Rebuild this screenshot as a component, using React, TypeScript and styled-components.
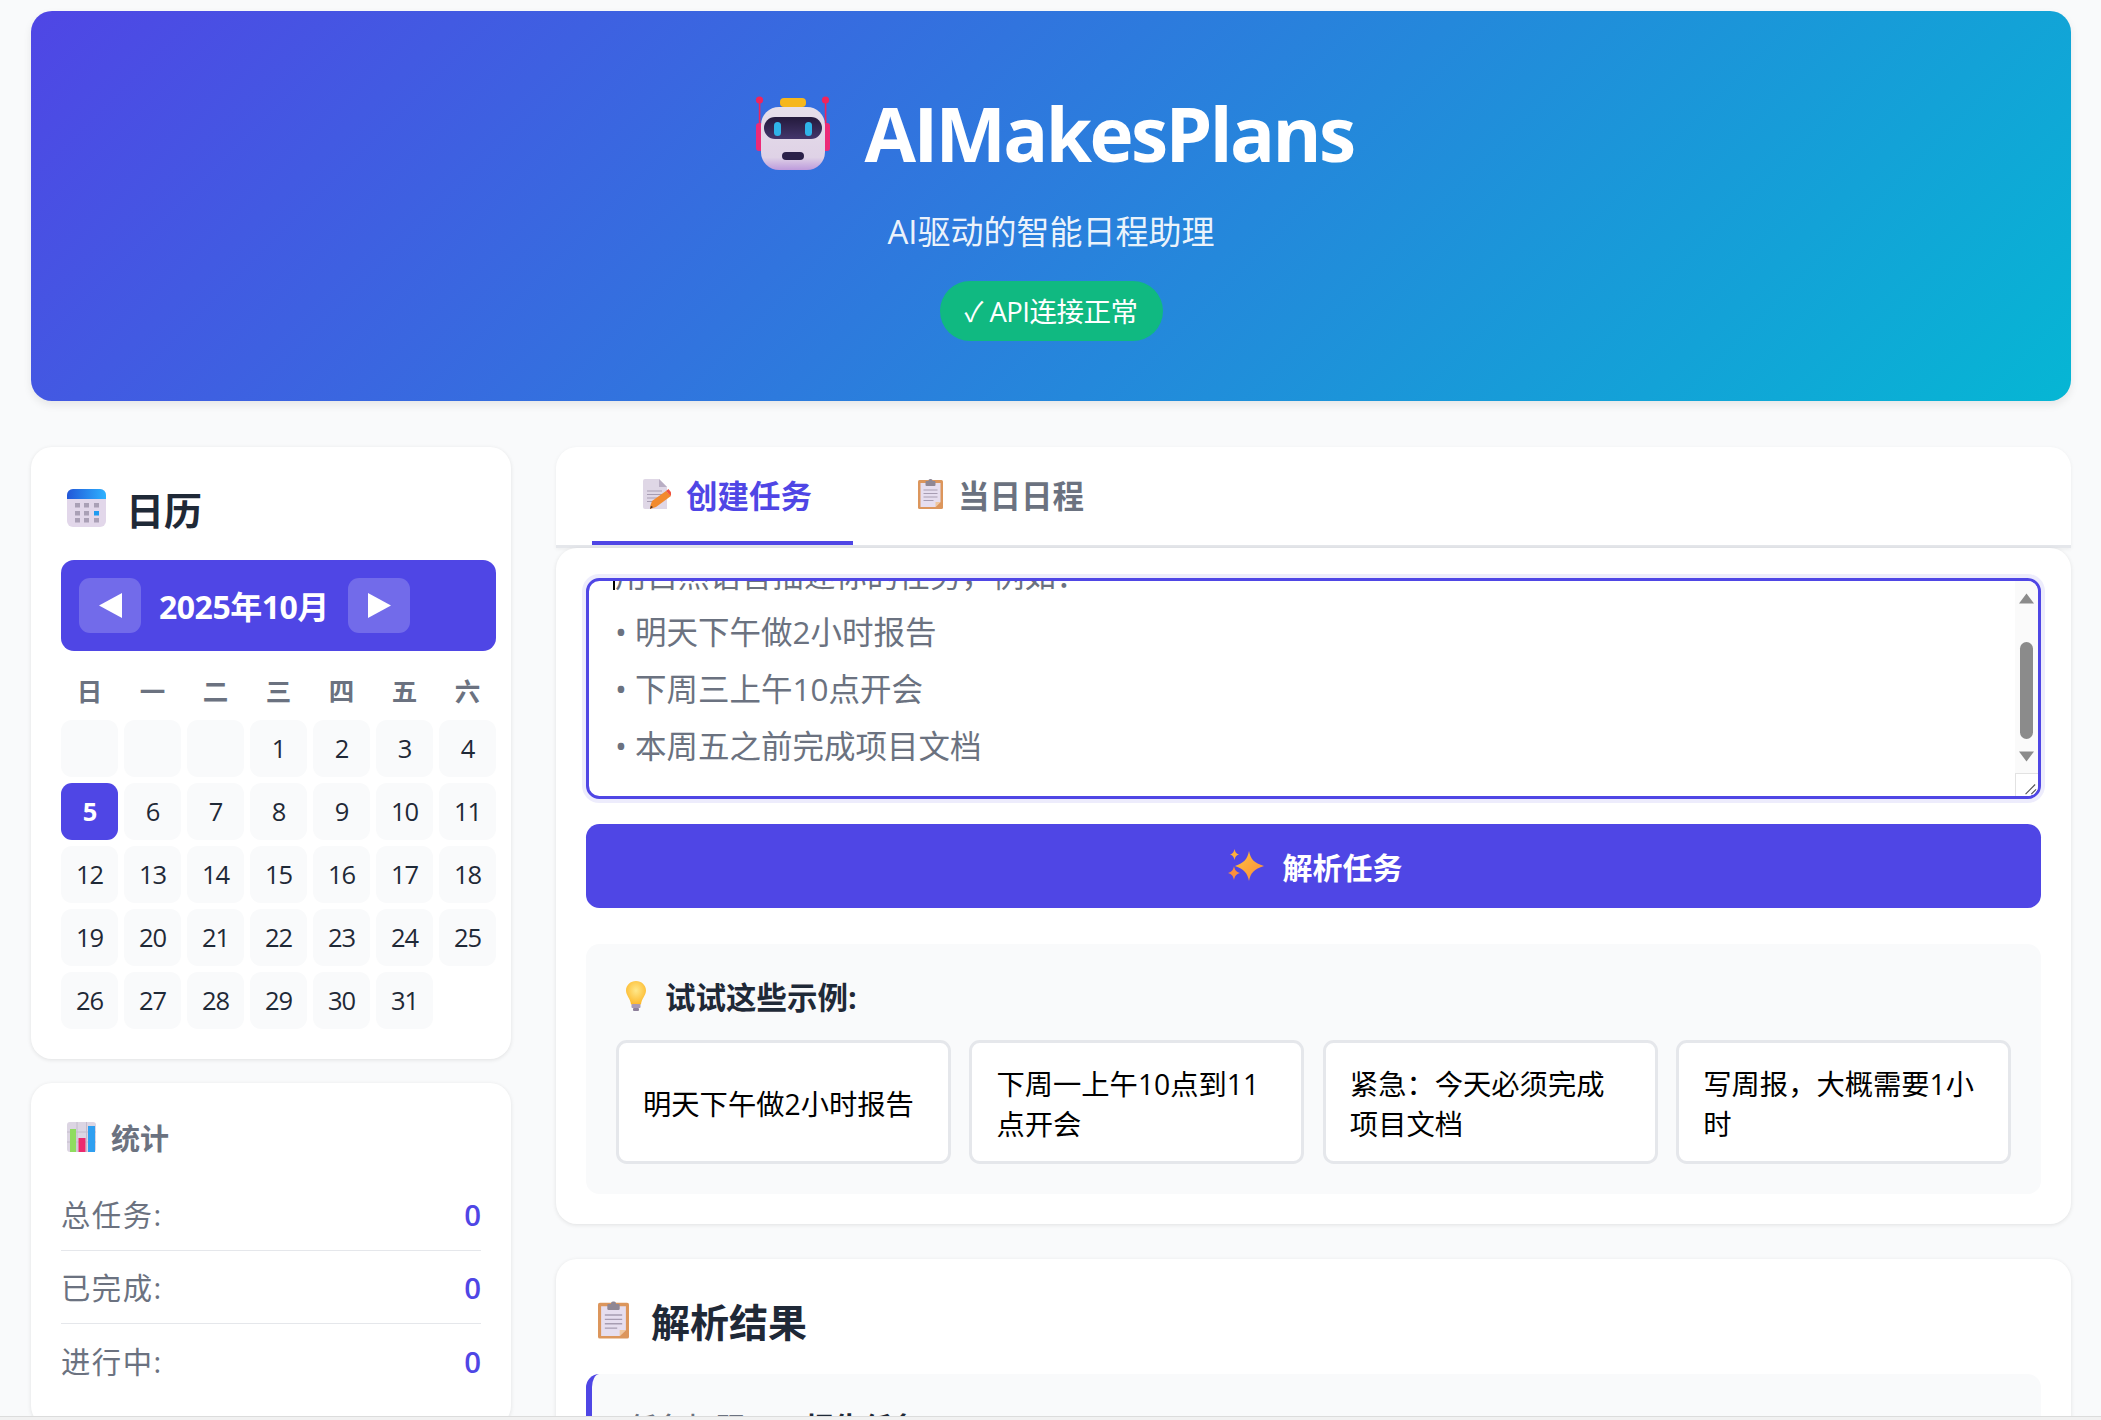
import React, { useLayoutEffect, useRef } from "react";
import styled, { createGlobalStyle } from "styled-components";

const Global = createGlobalStyle`
  html, body { margin: 0; padding: 0; background: #f1f1f1; }
  body { font-family: "Open Sans", "Noto Sans CJK SC", sans-serif; color: #1f2937; overflow: hidden; }
  * { box-sizing: border-box; }
`;

const Viewport = styled.div`
  height: 1417px;
  overflow: hidden;
  background: #f9fafb;
  border-bottom: 1px solid #dcdcdc;
  padding: 10.67px 30px 0 31px;
`;

const Hero = styled.header`
  height: 390px;
  border-radius: 21px;
  background: linear-gradient(135deg, #4f46e5 0%, #06b6d4 100%);
  box-shadow: 0 4px 8px rgba(0, 0, 0, 0.08);
  display: flex;
  flex-direction: column;
  align-items: center;
  padding-top: 82px;
  color: #fff;
`;

const HeroTitle = styled.h1`
  margin: 0;
  height: 80px;
  padding-left: 6px;
  display: flex;
  align-items: center;
  gap: 35px;
  font-size: 74.67px;
  font-weight: 700;
  letter-spacing: -2.6px;
  line-height: 80px;
`;

const HeroSub = styled.p`
  margin: 38px 0 0;
  font-size: 33px;
  line-height: 42px;
  color: rgba(255, 255, 255, 0.92);
`;

const StatusPill = styled.div`
  margin-top: 28px;
  height: 60px;
  width: 223px;
  padding-bottom: 2px;
  border-radius: 30px;
  background: #10b981;
  display: flex;
  align-items: center;
  justify-content: center;
  font-size: 27.5px;
  letter-spacing: -0.5px;
  white-space: nowrap;
`;

const Columns = styled.div`
  margin-top: 46px;
  display: grid;
  grid-template-columns: 480px 1fr;
  gap: 45px;
  align-items: start;
`;

const Side = styled.aside`
  display: flex;
  flex-direction: column;
  gap: 24px;
`;

const Main = styled.main`
  display: flex;
  flex-direction: column;
  min-width: 0;
`;

const Card = styled.section`
  background: #fff;
  border-radius: 21px;
  box-shadow: 0 1px 4px rgba(0, 0, 0, 0.1);
  padding: 30px;
`;

const CalendarTitle = styled.h2`
  margin: 0 0 17px;
  height: 66px;
  display: flex;
  align-items: center;
  gap: 20px;
  padding-left: 6px;
  padding-bottom: 3px;
  font-size: 38px;
  font-weight: 700;
  color: #1f2937;
`;

const MonthBar = styled.div`
  width: 435px;
  height: 91px;
  border-radius: 13px;
  background: #4f46e5;
  padding: 18px;
  display: flex;
  align-items: center;
  gap: 18px;
  color: #fff;
  font-size: 32px;
  font-weight: 700;
  letter-spacing: -0.5px;
`;

const MonthButton = styled.button`
  width: 62px;
  height: 55px;
  border: 0;
  border-radius: 11px;
  background: rgba(255, 255, 255, 0.2);
  display: flex;
  align-items: center;
  justify-content: center;
  padding: 0;
`;

const MonthLabel = styled.span`
  width: 171px;
  white-space: nowrap;
`;

const DayGrid = styled.div`
  width: 435px;
  display: grid;
  grid-template-columns: repeat(7, 57px);
  grid-auto-rows: 57px;
  gap: 6px;
`;

const WeekGrid = styled(DayGrid)`
  margin-top: 20.5px;
  grid-auto-rows: 36px;
  margin-bottom: 12.5px;
`;

const WeekDay = styled.div`
  display: flex;
  align-items: center;
  justify-content: center;
  font-size: 25.5px;
  font-weight: 700;
  color: #6b7280;
`;

const Day = styled.div<{ $active?: boolean }>`
  border-radius: 11px;
  background: ${(p) => (p.$active ? "#4f46e5" : "#f9fafb")};
  color: ${(p) => (p.$active ? "#fff" : "#1f2937")};
  font-weight: ${(p) => (p.$active ? 700 : 500)};
  font-size: 25.5px;
  letter-spacing: -1px;
  display: flex;
  align-items: center;
  justify-content: center;
`;

const StatsTitle = styled.h3`
  margin: 9px 0 25px;
  display: flex;
  align-items: center;
  gap: 15px;
  padding-left: 6px;
  height: 31px;
  font-size: 29px;
  font-weight: 700;
  color: #6b7280;
`;

const StatRow = styled.div`
  height: 73px;
  display: flex;
  justify-content: space-between;
  align-items: center;
  font-size: 29.33px;
  color: #6b7280;
  border-bottom: 1px solid #e5e7eb;
  &:last-child { border-bottom: 0; }
`;

const StatLabel = styled.span`
  letter-spacing: 1.5px;
`;

const StatValue = styled.span`
  color: #4f46e5;
  font-weight: 600;
  padding-top: 3px;
`;

const TabBar = styled.nav`
  height: 101px;
  background: #fff;
  border-radius: 21px 21px 0 0;
  border-bottom: 3px solid #e5e7eb;
  box-shadow: 0 1px 4px rgba(0, 0, 0, 0.06);
  padding-left: 36px;
  display: flex;
  gap: 14px;
`;

const Tab = styled.div<{ $active?: boolean }>`
  height: 98px;
  padding: 0 41px 0 51px;
  display: flex;
  align-items: center;
  gap: 15px;
  font-size: 31.5px;
  font-weight: 700;
  color: ${(p) => (p.$active ? "#4f46e5" : "#6b7280")};
  border-bottom: 4px solid ${(p) => (p.$active ? "#4f46e5" : "transparent")};
`;

const TextBox = styled.div`
  position: relative;
  height: 221px;
  border: 3px solid #4f46e5;
  border-radius: 13.33px;
  box-shadow: 0 0 0 4px rgba(79, 70, 229, 0.1);
  overflow: hidden;
  background: #fff;
`;

const Input = styled.textarea`
  display: block;
  width: 100%;
  height: 100%;
  border: 0;
  outline: 0;
  resize: none;
  overflow: hidden;
  background: transparent;
  padding: 24px 26px;
  font-family: "Open Sans", "Noto Sans CJK SC", sans-serif;
  font-size: 31.5px;
  line-height: 56.8px;
  color: #6b7280;
`;

const Caret = styled.span`
  position: absolute;
  left: 24px;
  top: 0;
  width: 1.5px;
  height: 9px;
  background: #000;
`;

const ScrollTrack = styled.div`
  position: absolute;
  top: 0;
  right: 0;
  bottom: 0;
  width: 23px;
  background: #fafafa;
`;

const ScrollArrow = styled.svg<{ $top: number }>`
  position: absolute;
  left: 4px;
  top: ${(p) => p.$top}px;
`;

const ScrollThumb = styled.div`
  position: absolute;
  left: 5px;
  top: 61px;
  width: 13px;
  height: 97px;
  border-radius: 7px;
  background: #8b8b8b;
`;

const Resizer = styled.svg`
  position: absolute;
  right: 0;
  bottom: 0;
  border-top: 1px solid #e2e2e2;
  border-left: 1px solid #e2e2e2;
  background: #fff;
`;

const Submit = styled.button`
  margin-top: 25px;
  width: 100%;
  height: 84px;
  border: 0;
  border-radius: 13.33px;
  background: #4f46e5;
  color: #fff;
  padding-left: 9px;
  display: flex;
  align-items: center;
  justify-content: center;
  gap: 18px;
  font-family: inherit;
  font-size: 30px;
  font-weight: 700;
`;

const Examples = styled.div`
  margin-top: 36px;
  height: 250px;
  border-radius: 13.33px;
  background: #f9fafb;
  padding: 37.5px 30px 0;
`;

const ExamplesTitle = styled.h4`
  margin: 0 0 28.5px;
  height: 30px;
  display: flex;
  align-items: center;
  gap: 19px;
  padding-left: 10px;
  font-size: 30.5px;
  font-weight: 700;
  color: #1f2937;
`;

const ExampleGrid = styled.div`
  display: grid;
  grid-template-columns: repeat(4, 1fr);
  gap: 18.67px;
`;

const ExampleButton = styled.button`
  height: 124px;
  border: 3px solid #e5e7eb;
  border-radius: 10.67px;
  background: #fff;
  padding: 5px 24px 0 24px;
  text-align: left;
  font-family: inherit;
  font-size: 28.3px;
  line-height: 40.5px;
  color: #000;
`;

const ResultCard = styled(Card)`
  margin-top: 35px;
  padding-top: 37.5px;
`;

const ResultTitle = styled.h2`
  margin: 0 0 29.5px;
  height: 48px;
  display: flex;
  align-items: center;
  gap: 22px;
  padding-left: 12px;
  font-size: 39px;
  font-weight: 700;
  color: #1f2937;
`;

const ResultItem = styled.div`
  height: 200px;
  border-radius: 13.33px;
  border-left: 6px solid #4f46e5;
  background: #f9fafb;
  padding: 34px 0 0 36px;
  display: grid;
  grid-template-columns: 177px 1fr;
  align-items: start;
  font-size: 29px;
  line-height: 40px;
`;

const ResultKey = styled.span`
  color: #6b7280;
  font-weight: 500;
`;

const ResultValue = styled.strong`
  color: #1f2937;
  font-weight: 700;
`;

const RobotIcon = () => (
  <svg width="75" height="74" viewBox="0 0 75 74">
    <defs>
      <linearGradient id="rb" x1="0" y1="0" x2="0" y2="1">
        <stop offset="0" stopColor="#e6dfea" />
        <stop offset="0.8" stopColor="#dfd2e6" />
        <stop offset="1" stopColor="#bd9bdc" />
      </linearGradient>
      <linearGradient id="visor" x1="0" y1="0" x2="0" y2="1">
        <stop offset="0" stopColor="#241a3c" />
        <stop offset="1" stopColor="#43366b" />
      </linearGradient>
    </defs>
    <rect x="3.800" y="4" width="1.600" height="26" fill="#f0245c" />
    <rect x="69.800" y="4" width="1.600" height="26" fill="#f0245c" />
    <circle cx="4.500" cy="4" r="3.600" fill="#f0245c" />
    <circle cx="70.500" cy="4" r="3.600" fill="#f0245c" />
    <rect x="1" y="27" width="8" height="28" rx="3" fill="#ec2a78" />
    <rect x="66" y="27" width="9" height="28" rx="3" fill="#ec2a78" />
    <rect x="25" y="2" width="26" height="9" rx="4" fill="#f6b71c" />
    <rect x="6" y="11" width="64" height="63" rx="18" fill="url(#rb)" />
    <rect x="9" y="21" width="58" height="22" rx="11" fill="url(#visor)" />
    <rect x="19" y="26" width="7" height="14" rx="3.500" fill="#2fb4e8" />
    <rect x="50" y="26" width="7" height="14" rx="3.500" fill="#2fb4e8" />
    <rect x="27" y="56" width="22" height="8" rx="4" fill="#2b2048" />
  </svg>
);

const CalendarIcon = () => (
  <svg width="39" height="38" viewBox="0 0 39 38">
    <defs>
      <linearGradient id="cal" x1="0" y1="0" x2="1" y2="0">
        <stop offset="0" stopColor="#2257d8" />
        <stop offset="1" stopColor="#2db2ff" />
      </linearGradient>
    </defs>
    <rect x="0" y="0" width="39" height="38" rx="6" fill="#e2d7ea" />
    <path d="M0 10V6a6 6 0 0 1 6-6h27a6 6 0 0 1 6 6v4z" fill="url(#cal)" />
    {[8, 17, 27].map((x) =>
      [14, 22, 29].map((y) => (
        <rect key={`${x}-${y}`} x={x} y={y} width="5" height="4.500" fill={x === 27 && y === 22 ? "#1e9bf0" : "#aaa0b6"} />
      ))
    )}
  </svg>
);

const ChartIcon = () => (
  <svg width="29" height="30" viewBox="0 0 29 30">
    <rect width="29" height="30" rx="3" fill="#dcd5e3" />
    <path d="M10 0v30M19.500 0v30M0 10h29M0 20h29" stroke="#c4bccc" strokeWidth="1" />
    <rect x="3" y="7" width="6" height="23" fill="#8fdc5f" />
    <rect x="11.500" y="16" width="7" height="14" fill="#ec2a6e" />
    <rect x="21" y="4" width="7" height="26" fill="#2f9ff0" />
  </svg>
);

const MemoIcon = () => (
  <svg width="28" height="30" viewBox="0 0 28 30">
    <path d="M0 2a2 2 0 0 1 2-2h14l8 8v22H2a2 2 0 0 1-2-2z" fill="#dfd7e6" />
    <path d="M16 0l8 8h-8z" fill="#b9aec4" />
    <path d="M4 12h15M4 15.500h15M4 19h11M4 22.500h8" stroke="#a79db2" strokeWidth="1.200" />
    <path d="M7 28l2-6 14-10 5 5-15 11-6 2z" fill="#f28a2e" />
    <path d="M23 12l2.500-2 3 4-1 3z" fill="#f0503c" />
    <path d="M7 30l1-3 2 1z" fill="#3a2a2a" />
  </svg>
);

const ClipboardIcon = ({ w = 25, h = 30 }: { w?: number; h?: number }) => (
  <svg width={w} height={h} viewBox="0 0 25 30">
    <rect x="0" y="1" width="25" height="29" rx="1.500" fill="#dc965c" />
    <path d="M2.500 4h20v19l-5 5h-15z" fill="#e6deef" />
    <path d="M17.500 28v-5h5z" fill="#f0c79e" />
    <rect x="7.500" y="2" width="10" height="5" rx="1" fill="#8f8794" />
    <rect x="10.500" y="0" width="4" height="3" rx="1.500" fill="#8f8794" />
    <path d="M5.500 11h14M5.500 14.500h14M5.500 18h14M5.500 21.500h10" stroke="#a79db2" strokeWidth="1.100" />
  </svg>
);

const SparklesIcon = () => (
  <svg width="37" height="34" viewBox="0 0 37 34">
    <defs>
      <linearGradient id="sp" x1="0" y1="0" x2="1" y2="1">
        <stop offset="0" stopColor="#ffc33c" />
        <stop offset="1" stopColor="#fb8a3c" />
      </linearGradient>
    </defs>
    <path d="M21 2c1.500 8 5 12 15 15-10 3-13.500 7-15 15-1.500-8-5-12-14-15 9-3 12.500-7 14-15z" fill="url(#sp)" />
    <path d="M6.500 0c.6 3 1.500 4.500 4.500 5.500-3 1-3.900 2.500-4.500 5.500-.6-3-1.500-4.500-4.500-5.500 3-1 3.900-2.500 4.500-5.500z" fill="#ffb03c" />
    <path d="M6 17c.8 4 2 5.800 6 7-4 1.200-5.200 3-6 7-.8-4-2-5.800-6-7 4-1.200 5.200-3 6-7z" fill="#fb8f3c" />
  </svg>
);

const BulbIcon = () => (
  <svg width="20" height="30" viewBox="0 0 20 30">
    <defs>
      <radialGradient id="bl" cx="0.5" cy="0.4" r="0.6">
        <stop offset="0" stopColor="#ffe88a" />
        <stop offset="1" stopColor="#fdb92c" />
      </radialGradient>
    </defs>
    <path d="M10 0c5.500 0 10 4.200 10 9.500 0 5-4.500 8-5 14H5C4.500 17.500 0 14.500 0 9.500 0 4.200 4.500 0 10 0z" fill="url(#bl)" />
    <rect x="5.500" y="23" width="9" height="4" rx="1" fill="#a99ab5" />
    <rect x="7" y="27" width="6" height="3" rx="1" fill="#8d7f9a" />
  </svg>
);

const TriangleLeft = () => (
  <svg width="23" height="25" viewBox="0 0 23 25"><path d="M23 0v25L0 12.500z" fill="#fff" /></svg>
);
const TriangleRight = () => (
  <svg width="23" height="25" viewBox="0 0 23 25"><path d="M0 0v25l23-12.500z" fill="#fff" /></svg>
);

const prompt = "请使用自然语言描述你的任务\n用自然语言描述你的任务，例如：\n• 明天下午做2小时报告\n• 下周三上午10点开会\n• 本周五之前完成项目文档\n\n";

const days: (number | null)[] = [null, null, null, ...Array.from({ length: 31 }, (_, i) => i + 1)];
const examples = ["明天下午做2小时报告", "下周一上午10点到11点开会", "紧急：今天必须完成项目文档", "写周报，大概需要1小时"];

export default function App() {
  const ref = useRef<HTMLTextAreaElement>(null);
  useLayoutEffect(() => {
    if (ref.current) ref.current.scrollTop = 114;
  }, []);
  return (
    <Viewport>
      <Global />
      <Hero>
        <HeroTitle>
          <RobotIcon />
          AIMakesPlans
        </HeroTitle>
        <HeroSub>AI驱动的智能日程助理</HeroSub>
        <StatusPill>✓ API连接正常</StatusPill>
      </Hero>
      <Columns>
        <Side>
          <Card>
            <CalendarTitle>
              <CalendarIcon />
              日历
            </CalendarTitle>
            <MonthBar>
              <MonthButton><TriangleLeft /></MonthButton>
              <MonthLabel>2025年10月</MonthLabel>
              <MonthButton><TriangleRight /></MonthButton>
            </MonthBar>
            <WeekGrid>
              {["日", "一", "二", "三", "四", "五", "六"].map((d) => (
                <WeekDay key={d}>{d}</WeekDay>
              ))}
            </WeekGrid>
            <DayGrid>
              {days.map((d, i) => (
                <Day key={i} $active={d === 5}>{d}</Day>
              ))}
            </DayGrid>
          </Card>
          <Card>
            <StatsTitle>
              <ChartIcon />
              统计
            </StatsTitle>
            <StatRow><StatLabel>总任务:</StatLabel><StatValue>0</StatValue></StatRow>
            <StatRow><StatLabel>已完成:</StatLabel><StatValue>0</StatValue></StatRow>
            <StatRow><StatLabel>进行中:</StatLabel><StatValue>0</StatValue></StatRow>
          </Card>
        </Side>
        <Main>
          <TabBar>
            <Tab $active><MemoIcon />创建任务</Tab>
            <Tab><ClipboardIcon />当日日程</Tab>
          </TabBar>
          <Card>
            <TextBox>
              <Input ref={ref} readOnly value={prompt} />
              <Caret />
              <ScrollTrack>
                <ScrollArrow $top={12} width="15" height="11" viewBox="0 0 15 11">
                  <path d="M7.500 0.500L15 10.500H0z" fill="#8b8b8b" />
                </ScrollArrow>
                <ScrollThumb />
                <ScrollArrow $top={170} width="15" height="11" viewBox="0 0 15 11">
                  <path d="M0 0.500h15L7.500 10.500z" fill="#8b8b8b" />
                </ScrollArrow>
                <Resizer width="23" height="23" viewBox="0 0 23 23">
                  <path d="M10 21L20 11M16 21l5-5" stroke="#555" strokeWidth="1.200" />
                </Resizer>
              </ScrollTrack>
            </TextBox>
            <Submit><SparklesIcon />解析任务</Submit>
            <Examples>
              <ExamplesTitle><BulbIcon />试试这些示例:</ExamplesTitle>
              <ExampleGrid>
                {examples.map((e) => (
                  <ExampleButton key={e}>{e}</ExampleButton>
                ))}
              </ExampleGrid>
            </Examples>
          </Card>
          <ResultCard>
            <ResultTitle><ClipboardIcon w={31} h={38} />解析结果</ResultTitle>
            <ResultItem>
              <ResultKey>任务标题:</ResultKey>
              <ResultValue>报告任务</ResultValue>
            </ResultItem>
          </ResultCard>
        </Main>
      </Columns>
    </Viewport>
  );
}
